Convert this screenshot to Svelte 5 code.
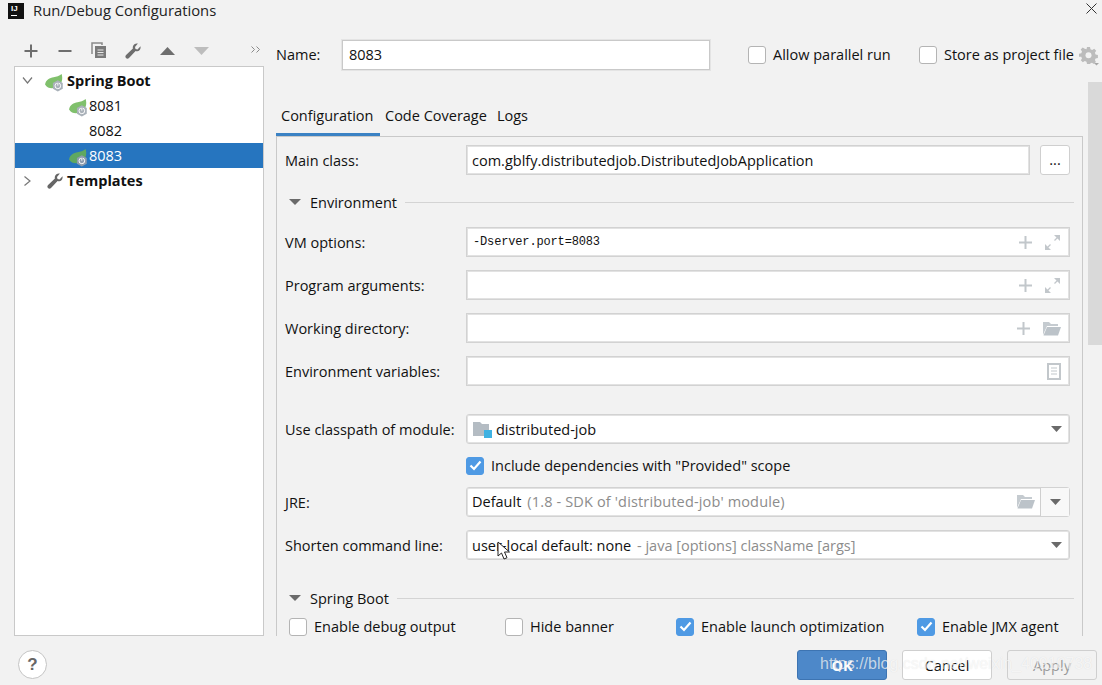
<script>
	const rows = ['VM options:', 'Program arguments:', 'Working directory:', 'Environment variables:'];
</script>

{#snippet spring(dim = false)}
	<svg class="spring" width="20" height="18" viewBox="0 0 21 19">
		<path d="M0 11C1 6 5 4 9 3.500 12 3 15 2 17.500 0 19 5 18 10 14 13 9 16 3 16 0 11z" fill={dim ? '#5fa860' : '#80c06c'} />
		<path d="M13.500 6.500l5.200 3v6l-5.200 3-5.200-3v-6z" fill={dim ? '#8d9cae' : '#a9b1b9'} />
		<circle cx="13.500" cy="12.500" r="3" fill="none" stroke="#fff" stroke-width="1" />
		<path d="M13.500 8.900v3.200" stroke={dim ? '#8d9cae' : '#a9b1b9'} stroke-width="2.200" />
		<path d="M13.500 9.500v2.800" stroke="#fff" stroke-width="1" />
	</svg>
{/snippet}

{#snippet wrench(color = '#6e6e6e', size = 18)}
	<svg width={size} height={size} viewBox="0 0 18 18">
		<path d="M16.500 4.200c.6 2.400-.8 4.600-3 5-.7.100-1.300.100-1.900-.1L5 16c-.9.900-2.200.900-3 .1-.9-.9-.8-2.200.1-3l6.800-6.600c-.2-.7-.2-1.400 0-2 .6-2.200 2.800-3.400 5-2.900L11 5l.5 2 2 .5z" fill={color} />
	</svg>
{/snippet}

{#snippet plus()}
	<svg class="ficon" width="13" height="13" viewBox="0 0 13 13"><path d="M6.500 0v13M0 6.500h13" stroke="#c2c7cb" stroke-width="2" /></svg>
{/snippet}

{#snippet expand()}
	<svg class="ficon" width="17" height="17" viewBox="0 0 17 17">
		<path d="M10.500 6.500 15 2M2 15l4.500-4.500" stroke="#c2c7cb" stroke-width="1.300" fill="none" />
		<path d="M10 1h6v6zM1 10v6h6z" fill="#c2c7cb" />
	</svg>
{/snippet}

{#snippet folder()}
	<svg class="ficon" width="19" height="15" viewBox="0 0 19 15">
		<path d="M1 14V1h6l2 2h7v2H5z" fill="#c5cbd0" />
		<path d="M5 6h14l-3 8.500H1.500z" fill="#bcc3c9" />
	</svg>
{/snippet}

{#snippet caret()}
	<svg class="caret" width="11" height="6" viewBox="0 0 11 6"><path d="M0 0h11L5.500 6z" fill="#6a6a6a" /></svg>
{/snippet}

{#snippet checkbox(on = false)}
	<span class="check" class:on>
		{#if on}
			<svg width="13" height="11" viewBox="0 0 13 11"><path d="M1.500 5.500 5 9l6.500-7.500" fill="none" stroke="#fff" stroke-width="2.200" /></svg>
		{/if}
	</span>
{/snippet}

<div class="dialog">
	<header class="titlebar">
		<span class="logo"><b>IJ</b><i></i></span>
		<span class="title">Run/Debug Configurations</span>
		<svg class="close" width="11" height="11" viewBox="0 0 11 11"><path d="M.5.500l10 10M10.500.500l-10 10" stroke="#333" stroke-width="1" /></svg>
	</header>

	<div class="columns">
		<aside class="side">
			<div class="toolbar">
				<span class="tool"><svg width="14" height="14" viewBox="0 0 14 14"><path d="M7 .500v13M.500 7h13" stroke="#6e6e6e" stroke-width="2" /></svg></span>
				<span class="tool"><svg width="14" height="14" viewBox="0 0 14 14"><path d="M.500 7h13" stroke="#6e6e6e" stroke-width="2" /></svg></span>
				<span class="tool"><svg width="16" height="17" viewBox="0 0 16 17">
					<path d="M1 12V1h10v2" fill="none" stroke="#8a8a8a" stroke-width="1.500" />
					<rect x="4" y="4" width="11" height="12" fill="#7a7a7a" />
					<path d="M6.500 8h6M6.500 10.500h6M6.500 13h6" stroke="#e8e8e8" stroke-width="1" />
				</svg></span>
				<span class="tool">{@render wrench()}</span>
				<span class="tool"><svg width="15" height="8" viewBox="0 0 15 8"><path d="M7.500 0 15 8H0z" fill="#6e6e6e" /></svg></span>
				<span class="tool"><svg width="15" height="8" viewBox="0 0 15 8"><path d="M7.500 8 15 0H0z" fill="#bdbdbd" /></svg></span>
				<svg class="more" width="10" height="7" viewBox="0 0 10 7"><path d="M.5.500l3 3-3 3M5.500.500l3 3-3 3" fill="none" stroke="#8a8a8a" stroke-width="1" /></svg>
			</div>
			<div class="tree">
				<div class="node top">
					<svg class="arrow" width="10" height="7" viewBox="0 0 10 7"><path d="M.500.500 5 6 9.500.500" fill="none" stroke="#777" stroke-width="1.200" /></svg>
					{@render spring()}
					<b>Spring Boot</b>
				</div>
				<div class="node leaf">{@render spring()}<span>8081</span></div>
				<div class="node leaf"><span class="nospring">8082</span></div>
				<div class="node leaf selected">{@render spring(true)}<span>8083</span></div>
				<div class="node top">
					<svg class="arrow" width="7" height="10" viewBox="0 0 7 10"><path d="M.500.500 6 5 .500 9.500" fill="none" stroke="#777" stroke-width="1.200" /></svg>
					<span class="tpl">{@render wrench('#666', 18)}</span>
					<b>Templates</b>
				</div>
			</div>
		</aside>

		<main class="content">
			<div class="namerow">
				<label class="namelabel" for="cfgname">Name:</label>
				<input id="cfgname" class="nameinput" value="8083" />
				<span class="opt first">{@render checkbox()}Allow parallel run</span>
				<span class="opt">{@render checkbox()}Store as project file</span>
				<svg class="gear" width="20" height="20" viewBox="0 0 20 20">
					<path d="M8 1h3l.5 2.300 1.700.7 2-1.300 2 2-1.300 2 .7 1.700 2.300.5v3l-2.300.5-.7 1.700 1 1.800-2 2-2-1.200-1.700.7L11 18H8l-.5-2.300-1.700-.7-2 1.200-2-2 1.200-1.800-.7-1.700L0 10.700v-3l2.300-.5.7-1.700-1.300-2 2-2 2 1.300L7.500 3.300z" fill="#bcbcbc" />
					<circle cx="9.500" cy="9.300" r="3" fill="#f2f2f2" />
					<path d="M15 17h5l-2.500 2.500z" fill="#a8a8a8" />
				</svg>
			</div>

			<nav class="tabs">
				<span class="tab active">Configuration</span>
				<span class="tab">Code Coverage</span>
				<span class="tab">Logs</span>
			</nav>

			<section class="panel">
				<div class="row main-class">
					<span>Main class:</span>
					<div class="withbtn">
						<div class="field">com.gblfy.distributedjob.DistributedJobApplication</div>
						<span class="dots">...</span>
					</div>
				</div>

				<div class="group env"><span class="tri"></span>Environment<i></i></div>

				<div class="stack">
					{#each rows as label, i}
						<div class="row">
							<span>{label}</span>
							<div class="field">
								{#if i === 0}<span class="mono">-Dserver.port=8083</span>{/if}
								<span class="icons">
									{#if i < 3}{@render plus()}{/if}
									{#if i < 2}{@render expand()}{/if}
									{#if i === 2}{@render folder()}{/if}
									{#if i === 3}
										<svg class="ficon" width="14" height="17" viewBox="0 0 14 17">
											<rect x="1" y="1" width="12" height="15" fill="none" stroke="#c2c7cb" stroke-width="2" />
											<path d="M4 5h6M4 8h6M4 11h6" stroke="#c2c7cb" stroke-width="1.200" />
										</svg>
									{/if}
								</span>
							</div>
						</div>
					{/each}
				</div>

				<div class="row module">
					<span>Use classpath of module:</span>
					<div class="field round">
						<svg class="modicon" width="20" height="17" viewBox="0 0 20 17">
							<path d="M0 1h7l2 2h7v12H0z" fill="#b4bcc3" />
							<rect x="11" y="9" width="8" height="8" fill="#3fb2e2" />
						</svg>
						distributed-job
						<span class="icons">{@render caret()}</span>
					</div>
				</div>

				<div class="row include">
					<span></span>
					<span class="opt">{@render checkbox(true)}Include dependencies with "Provided" scope</span>
				</div>

				<div class="row jre">
					<span>JRE:</span>
					<div class="field round split">
						<div class="jre-text">Default <em>(1.8 - SDK of 'distributed-job' module)</em><span class="icons">{@render folder()}</span></div>
						<div class="jre-drop">{@render caret()}</div>
					</div>
				</div>

				<div class="row shorten">
					<span>Shorten command line:</span>
					<div class="field round">
						user-local default: none&nbsp;<em>- java [options] className [args]</em>
						<span class="icons">{@render caret()}</span>
					</div>
				</div>

				<div class="group boot"><span class="tri"></span>Spring Boot<i></i></div>

				<div class="boot-opts">
					<span class="opt">{@render checkbox()}Enable debug output</span>
					<span class="opt">{@render checkbox()}Hide banner</span>
					<span class="opt">{@render checkbox(true)}Enable launch optimization</span>
					<span class="opt">{@render checkbox(true)}Enable JMX agent</span>
				</div>
			</section>

			<!-- cursor sits over the Shorten field -->
			<svg class="cursor" width="14" height="19" viewBox="0 0 14 19">
				<path d="M1 1v14l3.500-3 2.500 6 3-1.300-2.500-5.700H12.500z" fill="#fff" stroke="#222" stroke-width="1" />
			</svg>
		</main>
		<div class="scrollbar"></div>
	</div>

	<footer class="footer">
		<span class="help">?</span>
		<div class="buttons">
			<span class="btn ok">OK</span>
			<span class="btn">Cancel</span>
			<span class="btn apply">Apply</span>
		</div>
		<span class="watermark">https://blog.csdn.net/weixin_40910738</span>
	</footer>
</div>

<style>
	:global(body) {
		margin: 0;
		background: #f2f2f2;
	}

	.dialog {
		position: relative;
		width: 1102px;
		height: 685px;
		overflow: hidden;
		background: #f2f2f2;
		color: #111;
		font-family: 'Open Sans', 'Noto Sans', sans-serif;
		font-size: 14.5px;
	}

	.titlebar {
		height: 22px;
		display: flex;
		align-items: center;
		padding-left: 8px;
		padding-right: 5px;
	}

	.logo {
		position: relative;
		width: 16px;
		height: 16px;
		background: #111;
		color: #fff;
		margin-right: 9px;
	}

	.logo b {
		position: absolute;
		left: 3px;
		top: 0;
		font-size: 8px;
		line-height: 11px;
		font-family: 'Liberation Sans', sans-serif;
	}

	.logo i {
		position: absolute;
		left: 3px;
		top: 12px;
		width: 6px;
		height: 1px;
		background: #fff;
	}

	.title {
		font-size: 14.800px;
		line-height: 20px;
		margin-bottom: 2px;
		color: #222;
		flex: 1;
	}

	.close {
		margin-top: -5px;
	}

	.columns {
		display: flex;
		height: 614px;
		position: relative;
	}

	.side {
		width: 250px;
		margin-left: 14px;
		margin-right: 12px;
		flex: none;
		display: flex;
		flex-direction: column;
	}

	.toolbar {
		height: 44px;
		display: flex;
		align-items: center;
		padding-top: 13px;
		box-sizing: border-box;
	}

	.tool {
		width: 34px;
		display: flex;
		justify-content: center;
		align-items: center;
	}

	.more {
		margin-left: 33px;
		margin-top: -2px;
	}

	.tree {
		flex: 1;
		background: #fff;
		border: 1px solid #c9c9c9;
		padding-top: 1px;
	}

	.node {
		height: 25px;
		display: flex;
		align-items: center;
		white-space: nowrap;
	}

	.node.top {
		padding-left: 6px;
	}

	.arrow {
		width: 13px;
		margin-right: 11px;
		flex: none;
	}

	.spring {
		margin-top: 4px;
		flex: none;
	}

	.node.top .spring {
		margin-right: 2px;
	}

	.node b {
		font-weight: 700;
	}

	.tpl {
		display: flex;
		width: 21px;
		margin-left: 1px;
	}

	.node.leaf {
		padding-left: 54px;
	}

	.node.leaf span.nospring {
		margin-left: 20px;
	}

	.selected {
		background: #2675bf;
		color: #fff;
	}

	.content {
		position: relative;
		width: 807px;
		flex: none;
		display: flex;
		flex-direction: column;
	}

	.namerow {
		height: 30px;
		margin-top: 18px;
		display: flex;
		align-items: center;
	}

	.namerow > * {
		flex: none;
	}

	.namerow .opt {
		padding-bottom: 1px;
	}

	.namelabel {
		width: 66px;
		padding-bottom: 1px;
	}

	.nameinput {
		width: 368px;
		height: 30px;
		box-sizing: border-box;
		padding: 0 6px 1px;
		border: 1px solid #c9c9c9;
		box-shadow: 0 0 0 1px #e4e4e4;
		font: inherit;
		color: inherit;
		background: #fff;
		outline: none;
	}

	.opt {
		display: inline-flex;
		align-items: center;
		white-space: nowrap;
	}

	.opt.first {
		margin-left: 38px;
		width: 171px;
	}

	.check {
		width: 16px;
		height: 16px;
		flex: none;
		margin-right: 7px;
		display: inline-flex;
		align-items: center;
		justify-content: center;
		background: #fff;
		border: 1px solid #b4b4b4;
		border-radius: 3px;
	}

	.check.on {
		background: #4f9ae4;
		border-color: #4f9ae4;
	}

	.gear {
		margin-left: 5px;
		margin-top: 1px;
	}

	.tabs {
		margin-top: 35px;
		height: 31px;
		display: flex;
		align-items: center;
	}

	.tab {
		padding: 0 5px;
		height: 31px;
		line-height: 22px;
		box-sizing: border-box;
	}

	.tab.active {
		border-bottom: 3px solid #3b82c4;
		width: 104px;
	}

	.panel {
		flex: 1;
		border: 1px solid #c9c9c9;
		border-bottom: 0;
		padding: 8px 12px 0 8px;
		min-height: 0;
		overflow: hidden;
	}

	.row {
		display: grid;
		grid-template-columns: 181px 1fr;
		align-items: center;
	}

	.field {
		position: relative;
		display: flex;
		align-items: center;
		height: 30px;
		box-sizing: border-box;
		padding: 0 5px;
		background: #fff;
		border: 1px solid #d2d2d2;
		box-shadow: 0 0 0 1px #e2e2e2 inset;
		white-space: nowrap;
	}

	.field.round {
		border-radius: 3px;
	}

	.icons {
		margin-left: auto;
		display: flex;
		align-items: center;
		gap: 12px;
		padding-right: 3px;
	}

	.caret {
		margin-right: -1px;
	}

	.mono {
		font-family: 'Liberation Mono', monospace;
		font-size: 12px;
		letter-spacing: -0.15px;
		margin-left: 1px;
	}

	em {
		font-style: normal;
		color: #8c8c8c;
		margin-left: 2px;
	}

	.withbtn {
		display: flex;
		gap: 10px;
	}

	.withbtn .field {
		flex: 1;
	}

	.dots {
		width: 30px;
		height: 30px;
		box-sizing: border-box;
		background: #fff;
		border: 1px solid #cfcfcf;
		border-radius: 3px;
		text-align: center;
		line-height: 28px;
	}

	.group {
		display: flex;
		align-items: center;
		height: 20px;
	}

	.group i {
		flex: 1;
		height: 1px;
		background: #d4d4d4;
		margin-left: 8px;
		margin-right: -4px;
	}

	.tri {
		width: 0;
		height: 0;
		margin: 0 9px 0 4px;
		border-left: 6px solid transparent;
		border-right: 6px solid transparent;
		border-top: 6px solid #6a6a6a;
	}

	.env {
		margin-top: 17px;
	}

	.stack {
		margin-top: 15px;
		display: flex;
		flex-direction: column;
		gap: 13px;
	}

	.module {
		margin-top: 28px;
	}

	.modicon {
		margin-right: 3px;
		margin-left: 1px;
	}

	.include {
		margin-top: 12px;
		height: 19px;
	}

	.jre {
		margin-top: 12px;
	}

	.split {
		padding: 0;
	}

	.jre-text {
		flex: 1;
		display: flex;
		align-items: center;
		padding: 0 2px 1px 5px;
		height: 100%;
		box-sizing: border-box;
	}

	.jre-text em {
		margin-left: 6px;
		letter-spacing: 0.15px;
	}

	.jre-drop {
		width: 28px;
		height: 100%;
		display: flex;
		align-items: center;
		justify-content: center;
		background: #f8f8f8;
		border-left: 1px solid #cfcfcf;
	}

	.shorten {
		margin-top: 13px;
	}

	.boot {
		margin-top: 28px;
	}

	.boot-opts {
		margin-top: 8px;
		display: grid;
		grid-template-columns: 216px 171px 241px 1fr;
		padding-left: 4px;
		padding-bottom: 2px;
	}

	.boot-opts .opt {
		line-height: 21px;
	}

	.cursor {
		position: absolute;
		left: 221px;
		top: 519px;
	}

	.scrollbar {
		position: absolute;
		right: 0;
		top: 60px;
		width: 14px;
		height: 263px;
		background: #d9d9d9;
	}

	.footer {
		position: relative;
		height: 49px;
		display: flex;
		align-items: flex-start;
		justify-content: space-between;
		padding: 14px 5px 0 18px;
		box-sizing: border-box;
	}

	.help {
		width: 29px;
		height: 29px;
		box-sizing: border-box;
		border: 1px solid #c4c4c4;
		border-radius: 50%;
		background: #fff;
		text-align: center;
		line-height: 27px;
		font-weight: 700;
		font-size: 17px;
		color: #666;
		font-family: 'Liberation Sans', sans-serif;
	}

	.buttons {
		display: flex;
		gap: 15px;
	}

	.btn {
		width: 90px;
		height: 30px;
		box-sizing: border-box;
		border: 1px solid #cfcfcf;
		border-radius: 3px;
		background: #fff;
		text-align: center;
		line-height: 29px;
	}

	.btn.ok {
		background: #4d88c9;
		border-color: #3d74b2;
		color: #fff;
		font-weight: 700;
	}

	.btn.apply {
		background: #f2f2f2;
		color: #999;
	}

	.watermark {
		position: absolute;
		left: 820px;
		top: 19px;
		font-family: 'Liberation Sans', sans-serif;
		font-size: 16px;
		color: rgba(255, 255, 255, 0.7);
		text-shadow: 0 0 1px rgba(0, 0, 0, 0.1);
		white-space: nowrap;
	}
</style>
